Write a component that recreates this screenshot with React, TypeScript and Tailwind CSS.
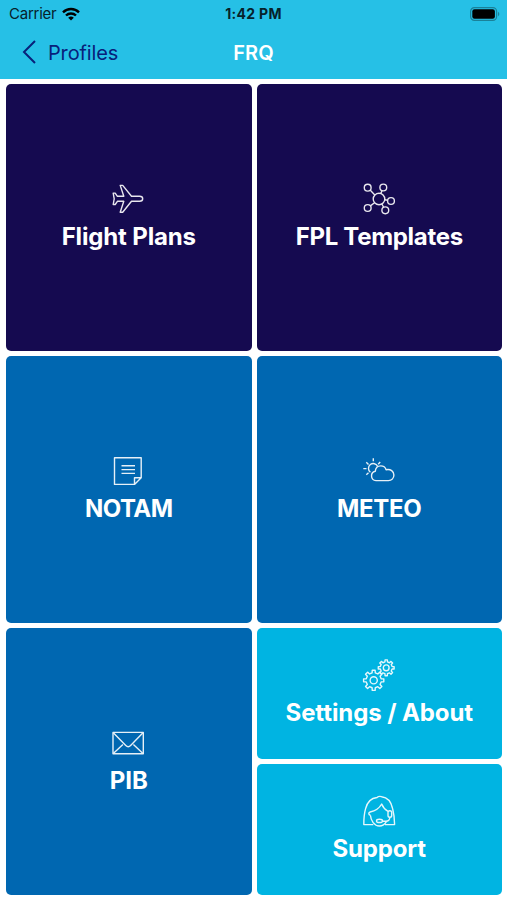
import React from "react";

const Svg: React.FC<{ children: React.ReactNode }> = ({ children }) => (
  <svg
    viewBox="0 0 32 32"
    className="mr-px size-8 overflow-visible opacity-90"
    fill="none"
    stroke="currentColor"
    strokeWidth={1.4}
    strokeLinejoin="round"
  >
    {children}
  </svg>
);

// outline of a gear with flat teeth
const gear = (cx: number, cy: number, r: number, depth: number, teeth: number) => {
  const step = (Math.PI * 2) / teeth;
  const points: string[] = [];
  for (let i = 0; i < teeth; i++) {
    const a = i * step - Math.PI / 2;
    [
      [-0.27, r - depth],
      [-0.18, r],
      [0.18, r],
      [0.27, r - depth],
    ].forEach(([t, rad]) => {
      const x = cx + Math.cos(a + t * step) * rad;
      const y = cy + Math.sin(a + t * step) * rad;
      points.push(`${x.toFixed(2)} ${y.toFixed(2)}`);
    });
  }
  return `M${points.join("L")}Z`;
};

const PlaneIcon = () => (
  <Svg>
    <path d="M8.2 2.4h2.5l8.8 10.9h8.1c1.8 0 3.1 1.2 3.1 2.5s-1.3 2.5-3.1 2.5h-8.1l-8.8 10.9H8.2l3.6-10.9H5.4L3.2 21.5h-2l1-5.7-1-5.7h2l2.2 3.2h6.4z" />
  </Svg>
);

const NetworkIcon = () => (
  <Svg>
    <circle cx="16" cy="16" r="5.8" />
    <circle cx="4.7" cy="4.7" r="3.4" />
    <circle cx="20.3" cy="4.5" r="3.4" />
    <circle cx="28" cy="18" r="3.4" />
    <circle cx="22.3" cy="27.3" r="3.4" />
    <circle cx="4.7" cy="25" r="3.4" />
    <path d="M7.1 7.1l4.7 4.8M19 7.7l-1.2 2.7M21.8 16.8l2.8.5M18.9 21l1.7 3.3M7.4 22.9l4.1-3.2" />
  </Svg>
);

const NoteIcon = () => (
  <Svg>
    <path d="M2.5 2.7h26.7v20l-6.7 6.7h-20zM22.5 29.4v-6.7h6.7" />
    <path d="M9.5 10.7H23M9.5 14.6H23M9.5 18.4H23" />
  </Svg>
);

const WeatherIcon = () => (
  <Svg>
    <path d="M13 25.6a4.7 4.7 0 0 1-.7-9.3c.2-3.2 2.4-5.4 5.5-5.4 2.6 0 4.5 1.3 5.3 3.8 4.5-1 7.8 1.7 7.8 5.4 0 3.2-2.4 5.5-5.4 5.5z" />
    <path d="M7.4 17.2a4.8 4.8 0 1 1 7.3-5.7" />
    <path d="M10.3 3.2v3.1M3.3 7.3l2.2 2.3M.3 13.6h3.2M3.3 19.8l2.2-2.1M17.2 7l-2 2.3" />
  </Svg>
);

const MailIcon = () => (
  <Svg>
    <path d="M1 5.4h30.3v21.4H1z" />
    <path d="M1.3 5.8l12.5 12.8c1.6 1.6 3.2 1.6 4.8 0L31 5.8M1.3 26.5l9.6-9.1M31 26.5l-9.6-9.1" />
  </Svg>
);

const GearsIcon = () => (
  <Svg>
    <path d={gear(10.7, 21.3, 10.2, 2.6, 8)} />
    <circle cx="10.7" cy="21.3" r="3.6" />
    <path d={gear(23.2, 8.8, 8, 2, 8)} />
    <circle cx="23.2" cy="8.8" r="2.9" />
  </Svg>
);

const SupportIcon = () => (
  <Svg>
    <path d="M10.3 29.6H.8c0-6 .5-11.5 1.8-16C4.4 6.5 8.5 3 14 2.5c1.5-1.4 3-1.4 4.6-.8 6 .7 9.6 5 11 11.8 1.2 4.6 1.9 10 2 16.1H22" />
    <path d="M7.4 20.3c-2-.5-2.2-2.7-.3-3.3 5-1 9.2-3.8 11.6-8 1.4 3.6 3.5 5.7 6.3 7.3M7.4 20.3c.5 5.3 3.8 10.5 9 10.7 3.3 0 5.6-2 7.1-4.7" />
    <rect x="25" y="15.7" width="3.7" height="6.6" rx="1.8" />
    <path d="M26.8 22.3c0 2.6-1.5 4-4 4h-3.2" />
    <ellipse cx="16.5" cy="25.9" rx="3" ry="1.6" />
  </Svg>
);

const Tile: React.FC<{
  icon: React.ReactNode;
  label: string;
  className: string;
}> = ({ icon, label, className }) => (
  <div
    className={`flex flex-col items-center justify-center gap-[7px] rounded-[5px] text-white ${className}`}
  >
    {icon}
    <h2 className="whitespace-nowrap text-2xl leading-[30px] font-bold">{label}</h2>
  </div>
);

const App: React.FC = () => {
  return (
    <div className="flex h-[900px] w-[507px] flex-col bg-white font-['Inter',sans-serif]">
      <header className="h-[79px] bg-[#26c0e6]">
        {/* Status bar */}
        <div className="grid h-7 grid-cols-3 items-center px-[7px] text-[#06222b]">
          <div className="flex items-center gap-1.5 pl-0.5">
            <span className="text-[15px] leading-7 tracking-[-0.25px]">Carrier</span>
            <svg viewBox="0 0 18 14" className="h-3.5 w-[18px] text-black" fill="none" stroke="currentColor" strokeWidth="2.4">
              <path d="M1 5.3a11.5 11.5 0 0 1 16 0M4 8.5a7.2 7.2 0 0 1 10 0" />
              <path d="M9 13.6l-2.8-2.8a4.1 4.1 0 0 1 5.6 0z" fill="currentColor" stroke="none" />
            </svg>
          </div>
          <span className="pb-px text-center text-[14px] leading-5 font-bold tracking-[0.3px]">1:42 PM</span>
          <svg viewBox="0 0 30 14" className="h-3.5 w-[30px] justify-self-end">
            <rect x=".6" y=".6" width="26" height="12.8" rx="3.8" fill="none" stroke="#1a8199" strokeWidth="1.2" />
            <rect x="2.3" y="2.3" width="22.6" height="9.4" rx="2.2" fill="#000" />
            <path d="M28 4.8c1.8.8 1.8 3.6 0 4.4z" fill="#1a8199" />
          </svg>
        </div>
        {/* Navigation */}
        <div className="grid h-12 grid-cols-3 items-center px-[22px]">
          <div className="flex items-center gap-3 text-[#08217a]">
            <svg viewBox="0 0 14 24" className="h-6 w-3.5" fill="none" stroke="currentColor" strokeWidth="2">
              <path d="M13 1L2 12l11 11" />
            </svg>
            <span className="pt-px text-xl tracking-[-0.15px]">Profiles</span>
          </div>
          <h1 className="pt-px text-center text-xl font-semibold text-white">FRQ</h1>
        </div>
      </header>

      <main className="grid flex-1 grid-cols-2 grid-rows-3 gap-[5px] p-[5px] pl-1.5">
        <Tile icon={<PlaneIcon />} label="Flight Plans" className="bg-[#150a50] tracking-[-0.15px]" />
        <Tile icon={<NetworkIcon />} label="FPL Templates" className="bg-[#150a50] tracking-[-0.3px]" />
        <Tile icon={<NoteIcon />} label="NOTAM" className="bg-[#0067b1] tracking-[-0.5px]" />
        <Tile icon={<WeatherIcon />} label="METEO" className="bg-[#0067b1] tracking-[-0.3px]" />
        <Tile icon={<MailIcon />} label="PIB" className="bg-[#0067b1]" />
        <div className="grid grid-rows-2 gap-[5px]">
          <Tile icon={<GearsIcon />} label="Settings / About" className="bg-[#00b4e2] tracking-[-0.1px]" />
          <Tile icon={<SupportIcon />} label="Support" className="bg-[#00b4e2] tracking-[-0.2px]" />
        </div>
      </main>
    </div>
  );
};

export default App;
